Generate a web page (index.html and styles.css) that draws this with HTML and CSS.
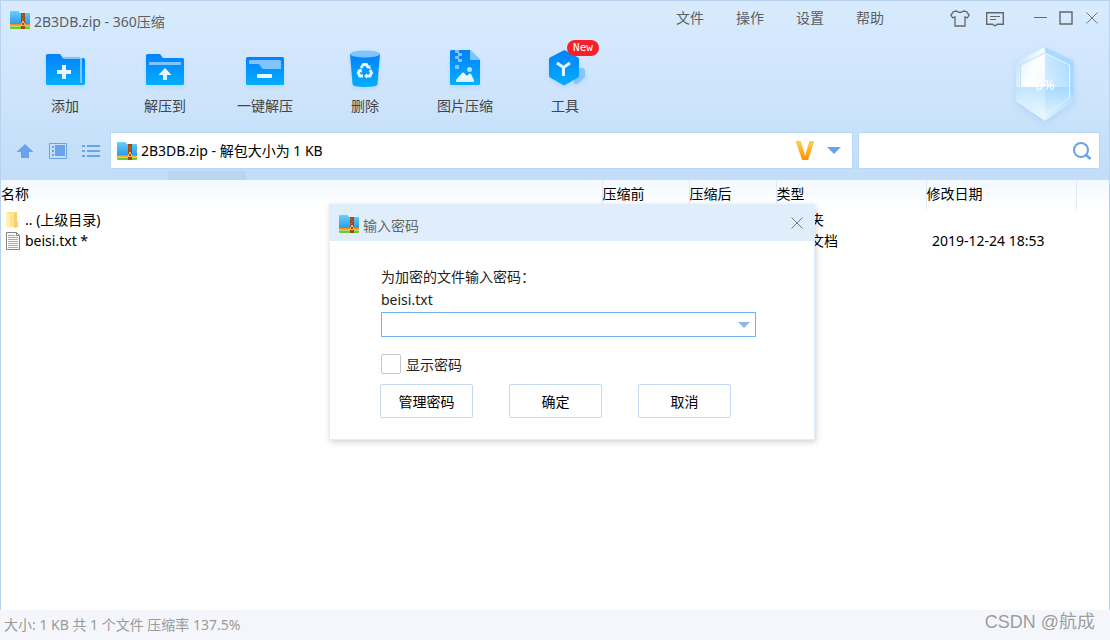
FILE: index.html
```html
<!doctype html>
<html lang="zh-CN">
<head>
    <meta charset="utf-8">
    <title>2B3DB.zip - 360压缩</title>
    <link rel="stylesheet" href="styles.css">
</head>

<body>
<!-- 公用图标 -->
<svg class="defs" width="0" height="0" aria-hidden="true">
    <defs>
        <linearGradient id="blue" x1="0" y1="0" x2="0" y2="1">
            <stop offset="0" stop-color="#0480fc"/>
            <stop offset="1" stop-color="#02aefe"/>
        </linearGradient>
        <linearGradient id="white" x1="0" y1="0" x2="0" y2="1">
            <stop offset="0" stop-color="#fff"/>
            <stop offset="1" stop-color="#d2f0ff"/>
        </linearGradient>
        <linearGradient id="sky" x1="0" y1="0" x2="0" y2="1">
            <stop offset="0" stop-color="#69cffa"/>
            <stop offset="1" stop-color="#2c9bee"/>
        </linearGradient>
    </defs>
    <symbol id="zip" viewBox="0 0 20 18">
        <path fill="url(#sky)" d="M0 1q0-1 1-1h7q1 0 1 1l1 1h9q1 0 1 1v10H0z"/>
        <path fill="#fb8a16" d="M0 13h20v2H0z"/>
        <path fill="#ffe04a" d="M0 14.6h20v.8H0z"/>
        <path fill="#72c92f" d="M0 15.4h20V17q0 1-1 1H1q-1 0-1-1z"/>
        <path fill="#a34a12" d="M11 2h4v16h-4z"/>
        <path fill="#c9772f" d="M12 4h1v1h-1zM13 6h1v1h-1zM12 8h1v1h-1z"/>
        <path fill="#f3b765" d="M12 10h2v2h1v3h-4v-3h1z"/>
        <path fill="#a3501b" d="M12 12h2v2h-2z"/>
    </symbol>
    <symbol id="cross" viewBox="0 0 14 14">
        <path fill="none" stroke="#777" d="M1.500 1.500l11 11M12.500 1.500l-11 11"/>
    </symbol>
</svg>

<div class="window">
    <header class="titlebar">
        <svg class="zip"><use href="#zip"/></svg>
        <h1>2B3DB.zip - 360压缩</h1>
        <nav class="menu">
            <a href="#">文件</a>
            <a href="#">操作</a>
            <a href="#">设置</a>
            <a href="#">帮助</a>
        </nav>
        <div class="extras">
            <button type="button" aria-label="换肤">
                <svg width="20" height="18" viewBox="0 0 20 18" fill="none" stroke="#666" stroke-width="1.3">
                    <path d="M6.500 2q3.500 3 7 0l3 .5 2.700 3.800-2.200 2.700-2-1.200V17H5V7.800L3 9 .8 6.300 3.500 2.500z"/>
                </svg>
            </button>
            <button type="button" aria-label="反馈">
                <svg width="20" height="18" viewBox="0 0 20 18" fill="none" stroke="#666" stroke-width="1.4">
                    <path d="M1.700 3.700h16.600v11.600h-6L10 17l-2.300-1.700h-6z"/>
                    <path stroke-width="1" d="M5 7.500h10M5 10.500h6"/>
                </svg>
            </button>
        </div>
        <div class="controls">
            <button type="button" aria-label="最小化">
                <svg width="14" height="14" viewBox="0 0 14 14"><path fill="#666" d="M1 6h13v1H1z"/></svg>
            </button>
            <button type="button" aria-label="最大化">
                <svg width="14" height="14" viewBox="0 0 14 14"><path fill="none" stroke="#666" stroke-width="1.400" d="M1 1h12v12H1z"/></svg>
            </button>
            <button type="button" aria-label="关闭">
                <svg width="14" height="14"><use href="#cross"/></svg>
            </button>
        </div>
    </header>

    <div class="toolbar">
        <button type="button" class="tool">
            <svg width="44" height="40" viewBox="0 0 44 40">
                <path fill="url(#blue)" d="M3 5.500Q3 4 4.500 4H17l3 4h20q2 0 2 2v23.500q0 1.500-1.500 1.500h-36Q3 35 3 33.500z"/>
                <path fill="#7fc4ff" d="M19 7h18v2H20.500zM37 8h2v25h-2z"/>
                <path fill="url(#white)" d="M19 15h4v5h5v4h-5v5h-4v-5h-5v-4h5z"/>
            </svg>
            <span>添加</span>
        </button>
        <button type="button" class="tool">
            <svg width="44" height="40" viewBox="0 0 44 40">
                <path fill="url(#blue)" d="M3 5.500Q3 4 4.500 4H17l3 4h19.500Q41 8 41 9.500v24q0 1.500-1.500 1.500h-35Q3 35 3 33.500z"/>
                <path fill="#7fc4ff" d="M6 12h32v3H6z"/>
                <path fill="url(#white)" d="M22 18l6.500 7H24v5h-4v-5h-4.500z"/>
            </svg>
            <span>解压到</span>
        </button>
        <button type="button" class="tool">
            <svg width="44" height="40" viewBox="0 0 44 40">
                <rect fill="url(#blue)" x="3" y="7" width="38" height="28" rx="1.500"/>
                <path fill="#7fc4ff" d="M7 10h30q1 0 1 1v8H21q-2 0-3-2l-1-2q-1-1-3-1H6v-3q0-1 1-1z"/>
                <rect fill="#e6f8ff" x="14" y="24" width="15" height="4" rx="1"/>
            </svg>
            <span>一键解压</span>
        </button>
        <button type="button" class="tool">
            <svg width="44" height="40" viewBox="0 0 44 40">
                <path fill="url(#blue)" d="M7 4h30l-2.500 30q-.2 1.500-2 2-10.500 2-21 0-1.800-.5-2-2z"/>
                <ellipse fill="#7fc4ff" cx="22" cy="4" rx="15" ry="3.500"/>
                <g fill="none" stroke="#e4f5ff" stroke-width="3">
                    <path d="M18 18l2.400-3.500h3l1.600 2.700"/>
                    <path d="M27 20l1.500 2.800-1.500 3.200h-3.500"/>
                    <path d="M20 26h-3.200l-1.500-3.200 1.500-2.300"/>
                </g>
                <path fill="#e4f5ff" d="M27.500 15v4.300l-4.300-1.500zM24 23.200v5.600l-3-2.800zM14 20l4.400-1.400.8 4.200z"/>
            </svg>
            <span>删除</span>
        </button>
        <button type="button" class="tool">
            <svg width="44" height="40" viewBox="0 0 44 40">
                <path fill="url(#blue)" d="M8.500 0H27l10 10v23.500q0 1.500-1.500 1.500h-27Q7 35 7 33.500v-32Q7 0 8.500 0z"/>
                <path fill="#7fc4ff" d="M27 0l10 10H28.500Q27 10 27 8.500zM12 0h4v3h-4zM15 3h4v3h-4zM12 6h4v3h-4zM15 9h4v3h-4zM12 15h4v4h-4z"/>
                <path fill="url(#white)" d="M13 32v-2l6-7q1-1 2 0l3 3 2-2q1-1 2 0l3 6v2z"/>
                <circle fill="#b9e2ff" cx="26.500" cy="19.500" r="2.500"/>
            </svg>
            <span>图片压缩</span>
        </button>
        <button type="button" class="tool">
            <svg width="44" height="40" viewBox="0 0 44 40">
                <path fill="#86c4fc" d="M33 18h6q3 0 3 3v6l-7 6.500q-3 1.500-4.500-1z"/>
                <path fill="url(#blue)" d="M20.500 .5q1-.5 2 0L35 7.500q1 .5 1 1.500v17q0 1-1 1.500l-13 7.500q-1 .5-2 0L7 27.500q-1-.5-1-1.500V9q0-1 1-1.500z"/>
                <path fill="none" stroke="#e6f6ff" stroke-width="3" d="M14 13l6.500 4.500L27 13M20.500 17v9"/>
            </svg>
            <span>工具</span>
            <em class="badge">New</em>
        </button>
        <div class="ratio">
            <svg width="64" height="78" viewBox="0 0 64 78">
                <defs>
                    <linearGradient id="rim" x1="0" y1="0" x2="1" y2="1">
                        <stop offset="0" stop-color="#b5dcff"/>
                        <stop offset=".45" stop-color="#f4fbff"/>
                        <stop offset="1" stop-color="#bfe2ff"/>
                    </linearGradient>
                    <linearGradient id="shine" x1="0" y1="0" x2="1" y2="1">
                        <stop offset="0" stop-color="#e3f3ff"/>
                        <stop offset=".4" stop-color="#fdffff"/>
                        <stop offset="1" stop-color="#e6f5ff"/>
                    </linearGradient>
                    <linearGradient id="gem" x1="0" y1="1" x2="1" y2="0">
                        <stop offset="0" stop-color="#e6f4ff"/>
                        <stop offset="1" stop-color="#a8daff"/>
                    </linearGradient>
                    <linearGradient id="water" x1="0" y1="0" x2="0" y2="1">
                        <stop offset="0" stop-color="#9bd5ff" stop-opacity=".8"/>
                        <stop offset="1" stop-color="#eef8ff" stop-opacity=".8"/>
                    </linearGradient>
                </defs>
                <path fill="url(#rim)" d="M32 1L3 15v40l29 20z"/>
                <path fill="#a8daff" d="M32 1l29 14v40L32 75z"/>
                <path fill="url(#shine)" d="M32 7L8 19v33l24 18z"/>
                <path fill="url(#gem)" d="M32 7l24 12v33L32 70z"/>
                <path fill="url(#water)" d="M3 41h58v14L32 75 3 55z"/>
                <path fill="#fff" opacity=".25" d="M3 41h29v34L3 55z"/>
                <path fill="none" stroke="#e8f6ff" d="M32 7l24.500 12v33L32 70"/>
                <path fill="none" stroke="#bfe2fc" d="M32 7L7.500 19v22"/>
            </svg>
            <span>0%</span>
        </div>
    </div>

    <div class="location">
        <div class="views">
            <button type="button" aria-label="向上">
                <svg width="18" height="16" viewBox="0 0 18 16"><path fill="#6ba2ec" d="M9 1l8.500 8H13v6H5V9H.5z"/></svg>
            </button>
            <button type="button" aria-label="预览">
                <svg width="18" height="16" viewBox="0 0 18 16">
                    <path fill="none" stroke="#6ba2ec" d="M.5.5h17v15H.5z"/>
                    <path fill="#6ba2ec" d="M6 2h10v11H6zM3 3h2v2H3zM3 7h2v2H3zM3 11h2v2H3z"/>
                </svg>
            </button>
            <button type="button" aria-label="列表">
                <svg width="18" height="16" viewBox="0 0 18 16"><path fill="#6ba2ec" d="M0 2h3v2H0zM5 2h13v2H5zM0 7h3v2H0zM5 7h13v2H5zM0 12h3v2H0zM5 12h13v2H5z"/></svg>
            </button>
        </div>
        <div class="address">
            <svg class="zip"><use href="#zip"/></svg>
            <input type="text" aria-label="地址" value="2B3DB.zip - 解包大小为 1 KB">
            <button type="button" class="vip">V</button>
            <button type="button" aria-label="展开">
                <svg width="14" height="8" viewBox="0 0 14 8"><path fill="#6ba2ec" d="M0 0h14L7 7z"/></svg>
            </button>
        </div>
        <div class="search">
            <input type="text" aria-label="搜索">
            <button type="button" aria-label="开始搜索">
                <svg width="20" height="20" viewBox="0 0 20 20" fill="none" stroke="#6ba2ec" stroke-width="2">
                    <circle cx="9" cy="9" r="7"/>
                    <path stroke-width="2.500" d="M13.500 13.500l5 4.500"/>
                </svg>
            </button>
        </div>
    </div>
    <div class="strip"></div>

    <main class="files">
        <table>
            <thead>
            <tr>
                <th class="name">名称</th>
                <th class="size">压缩前</th>
                <th class="size">压缩后</th>
                <th class="kind">类型</th>
                <th class="date">修改日期</th>
                <th class="rest"></th>
            </tr>
            </thead>
            <tbody>
            <tr>
                <td>
                    <div class="file">
                        <svg width="14" height="18" viewBox="0 0 14 18">
                            <path fill="#ffe391" d="M0 1h11v15H0z"/>
                            <path fill="#f8d06c" d="M8 1h3v10l1-1v6l-4 1z"/>
                            <path fill="#fff0b8" d="M0 1l4 2v14l-4-1z"/>
                        </svg>
                        <span>.. (上级目录)</span>
                    </div>
                </td>
                <td></td>
                <td></td>
                <td>文件夹</td>
                <td></td>
                <td></td>
            </tr>
            <tr>
                <td>
                    <div class="file">
                        <svg width="14" height="18" viewBox="0 0 14 18">
                            <path fill="#fbfbfb" stroke="#858585" d="M.5.500h10l3 3v14H.5z"/>
                            <path fill="none" stroke="#858585" d="M10.500.500v3h3"/>
                            <path stroke="#a9a9a9" d="M2 3.500h7M2 5.500h10M2 7.500h10M2 9.500h10M2 11.500h10M2 13.500h10M2 15.500h10"/>
                        </svg>
                        <span>beisi.txt *</span>
                    </div>
                </td>
                <td></td>
                <td></td>
                <td>文本文档</td>
                <td>2019-12-24 18:53</td>
                <td></td>
            </tr>
            </tbody>
        </table>
    </main>
</div>

<footer class="status">
    <span>大小: 1 KB 共 1 个文件 压缩率 137.5%</span>
    <span class="mark">CSDN @航成</span>
</footer>

<!-- 密码弹窗 -->
<form class="dialog" role="dialog" aria-labelledby="dialog-title">
    <div class="dialog-head">
        <svg class="zip"><use href="#zip"/></svg>
        <h2 id="dialog-title">输入密码</h2>
        <button type="button" aria-label="关闭">
            <svg width="14" height="14"><use href="#cross"/></svg>
        </button>
    </div>
    <div class="dialog-body">
        <label for="password">为加密的文件输入密码：<br>beisi.txt</label>
        <div class="password">
            <input type="password" id="password">
            <button type="button" aria-label="历史密码">
                <svg width="12" height="6" viewBox="0 0 12 6"><path fill="#8cb6f0" d="M0 0h12L6 6z"/></svg>
            </button>
        </div>
        <div class="show">
            <input type="checkbox" id="show">
            <label for="show">显示密码</label>
        </div>
        <div class="actions">
            <button type="button">管理密码</button>
            <button type="submit">确定</button>
            <button type="button">取消</button>
        </div>
    </div>
</form>
</body>
</html>
```
FILE: styles.css
```css
* {
    padding: 0;
    margin: 0;
    box-sizing: border-box;
}

body {
    display: flex;
    flex-direction: column;
    min-height: 100vh;
    font: 14px/20px "Noto Sans", "Noto Sans CJK SC", sans-serif;
    color: #000;
    background: #fff;
}

button,
input {
    font: inherit;
    color: inherit;
    border: 0;
    background: none;
    outline: none;
}

svg {
    display: block;
    flex: none;
}

.defs {
    position: absolute;
}

.zip {
    width: 20px;
    height: 18px;
}

.window {
    flex: 1;
    border: 1px solid #b7d3f0;
    border-bottom: 0;
    background: linear-gradient(#d8ebfe, #cfe5fc 80px, #c1ddf8 180px);
}

/* 标题栏 */
.titlebar {
    display: flex;
    align-items: center;
    height: 34px;
    padding: 0 10px 0 9px;
    color: #5c5f63;
}

.titlebar .zip {
    margin-top: 4px;
}

.titlebar h1 {
    flex: 1;
    margin: 8px 0 0 4px;
    font-size: 14px;
    font-weight: normal;
    white-space: nowrap;
}

.menu {
    display: flex;
    gap: 32px;
    margin-right: 66px;
}

.menu a {
    color: inherit;
    text-decoration: none;
}

.extras {
    display: flex;
    gap: 15px;
    margin-right: 28px;
}

.controls {
    display: flex;
    gap: 12px;
}

/* 工具栏 */
.toolbar {
    display: flex;
    height: 88px;
    padding: 0 32px 0 14px;
}

.tool {
    position: relative;
    display: flex;
    flex-direction: column;
    align-items: center;
    gap: 6px;
    width: 100px;
    padding-top: 15px;
    color: #444;
}

.tool svg {
    overflow: visible;
    filter: drop-shadow(0 2px 2px rgba(60, 140, 230, .15));
}

.badge {
    position: absolute;
    top: 5px;
    left: 52px;
    width: 32px;
    height: 16px;
    border-radius: 8px;
    background: #f8212b;
    color: #fff;
    font: 11px/16px "DejaVu Sans Mono", monospace;
    text-align: center;
}

.ratio {
    position: relative;
    margin: 11px 0 0 auto;
    filter: drop-shadow(0 3px 3px rgba(90, 160, 240, .2));
}

.ratio span {
    position: absolute;
    top: 29px;
    left: 0;
    width: 100%;
    color: #fff;
    text-align: center;
}

/* 地址栏 */
.location {
    display: flex;
    height: 46px;
    padding: 9px 9px 0 15px;
}

.views {
    display: flex;
    gap: 15px;
    width: 94px;
}

.address,
.search {
    display: flex;
    align-items: center;
    border: 1px solid #b9d6f3;
    background: #fff;
}

.address {
    flex: 1;
    padding: 0 11px 0 6px;
}

.address input {
    flex: 1;
    margin-left: 4px;
}

.vip {
    margin-right: 12px;
    background: linear-gradient(#ffcb45 20%, #ff9200 80%);
    background-clip: text;
    color: transparent;
    font: 800 26px/28px Inter, sans-serif;
}

.search {
    width: 242px;
    margin-left: 5px;
    padding: 0 7px;
}

.search input {
    flex: 1;
    min-width: 0;
}

.strip {
    width: 78px;
    height: 9px;
    margin: 2px 0 0 167px;
    background: #bad5f0;
}

/* 文件列表 */
.files {
    min-height: 430px;
    background: #fff;
}

table {
    width: 100%;
    table-layout: fixed;
    border-collapse: collapse;
}

th {
    height: 29px;
    padding-bottom: 2px;
    border-left: 1px solid #dcebfa;
    background: linear-gradient(#f3f9ff, #fff);
    font-weight: normal;
    text-align: left;
}

th:first-child {
    border-left: 0;
}

td {
    height: 21px;
    padding-left: 6px;
    white-space: nowrap;
}

td:first-child {
    padding-left: 5px;
}

.size {
    width: 87px;
}

.kind,
.date {
    width: 150px;
}

.rest {
    width: 33px;
}

.file {
    display: flex;
    align-items: center;
    gap: 5px;
}

/* 状态栏 */
.status {
    display: flex;
    align-items: center;
    justify-content: space-between;
    height: 30px;
    padding: 0 15px 0 4px;
    background: #f4f6fb;
    color: #9a9a9a;
}

.mark {
    margin-bottom: 6px;
    color: #9c9ca0;
    font-family: "Liberation Sans", "Noto Sans CJK SC", sans-serif;
    font-size: 18px;
    text-shadow: 1px 1px 0 #fff;
}

/* 弹窗 */
.dialog {
    position: absolute;
    top: 204px;
    left: 329px;
    width: 486px;
    border: 1px solid #e0eefc;
    background: #fff;
    box-shadow: 1px 2px 6px rgba(0, 0, 0, .18);
}

.dialog-head {
    display: flex;
    align-items: center;
    height: 36px;
    padding: 0 10px 0 9px;
    background: #e0eefc;
}

.dialog-head .zip {
    margin-top: 2px;
}

.dialog-head h2 {
    flex: 1;
    margin: 6px 0 0 4px;
    color: #666;
    font-size: 14px;
    font-weight: normal;
}

.dialog-body {
    padding: 24px 50px 21px;
    color: #222;
    line-height: 23px;
}

.password {
    display: flex;
    align-items: center;
    width: 375px;
    height: 25px;
    margin: 1px 0 0 1px;
    padding-right: 5px;
    border: 1px solid #74b2ec;
}

.password input {
    flex: 1;
}

.dialog-body > label {
    display: block;
    margin-left: 1px;
}

.show {
    display: flex;
    align-items: center;
    gap: 5px;
    height: 20px;
    margin: 17px 0 10px 1px;
}

.show input {
    width: 20px;
    height: 20px;
    border: 1px solid #c8c8c8;
    border-radius: 2px;
    appearance: none;
}

.actions {
    display: flex;
    gap: 36px;
}

.actions button {
    width: 93px;
    height: 34px;
    border: 1px solid #c3daf2;
    border-radius: 2px;
    color: #000;
}
```
